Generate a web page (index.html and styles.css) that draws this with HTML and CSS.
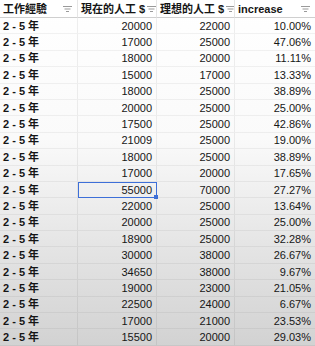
FILE: index.html
```html
<!DOCTYPE html>
<html>
<head>
<meta charset="utf-8">
<link rel="stylesheet" href="styles.css">
</head>
<body>
<div class="sheet">
  <div class="hd">
    <span class="hd-label">工作經驗</span>
    <svg class="flt" width="9" height="6" viewBox="0 0 9 6"><path d="M0 0.5H9M1.5 3H7.5M3 5.5H6" stroke="#9a9a9a" stroke-width="1"/></svg>
  </div>
  <div class="hd">
    <span class="hd-label">現在的人工 $</span>
    <svg class="flt" width="9" height="6" viewBox="0 0 9 6"><path d="M0 0.5H9M1.5 3H7.5M3 5.5H6" stroke="#9a9a9a" stroke-width="1"/></svg>
  </div>
  <div class="hd">
    <span class="hd-label">理想的人工 $</span>
    <svg class="flt" width="9" height="6" viewBox="0 0 9 6"><path d="M0 0.5H9M1.5 3H7.5M3 5.5H6" stroke="#9a9a9a" stroke-width="1"/></svg>
  </div>
  <div class="hd last">
    <span class="hd-label">increase</span>
    <svg class="flt" width="9" height="6" viewBox="0 0 9 6"><path d="M0 0.5H9M1.5 3H7.5M3 5.5H6" stroke="#9a9a9a" stroke-width="1"/></svg>
  </div>

  <div class="c t">2 - 5 年</div><div class="c n">20000</div><div class="c n">22000</div><div class="c n last">10.00%</div>
  <div class="c t">2 - 5 年</div><div class="c n">17000</div><div class="c n">25000</div><div class="c n last">47.06%</div>
  <div class="c t">2 - 5 年</div><div class="c n">18000</div><div class="c n">20000</div><div class="c n last">11.11%</div>
  <div class="c t">2 - 5 年</div><div class="c n">15000</div><div class="c n">17000</div><div class="c n last">13.33%</div>
  <div class="c t">2 - 5 年</div><div class="c n">18000</div><div class="c n">25000</div><div class="c n last">38.89%</div>
  <div class="c t">2 - 5 年</div><div class="c n">20000</div><div class="c n">25000</div><div class="c n last">25.00%</div>
  <div class="c t">2 - 5 年</div><div class="c n">17500</div><div class="c n">25000</div><div class="c n last">42.86%</div>
  <div class="c t">2 - 5 年</div><div class="c n">21009</div><div class="c n">25000</div><div class="c n last">19.00%</div>
  <div class="c t">2 - 5 年</div><div class="c n">18000</div><div class="c n">25000</div><div class="c n last">38.89%</div>
  <div class="c t">2 - 5 年</div><div class="c n">17000</div><div class="c n">20000</div><div class="c n last">17.65%</div>
  <div class="c t">2 - 5 年</div><div class="c n sel">55000<span class="handle"></span></div><div class="c n">70000</div><div class="c n last">27.27%</div>
  <div class="c t">2 - 5 年</div><div class="c n">22000</div><div class="c n">25000</div><div class="c n last">13.64%</div>
  <div class="c t">2 - 5 年</div><div class="c n">20000</div><div class="c n">25000</div><div class="c n last">25.00%</div>
  <div class="c t">2 - 5 年</div><div class="c n">18900</div><div class="c n">25000</div><div class="c n last">32.28%</div>
  <div class="c t">2 - 5 年</div><div class="c n">30000</div><div class="c n">38000</div><div class="c n last">26.67%</div>
  <div class="c t">2 - 5 年</div><div class="c n">34650</div><div class="c n">38000</div><div class="c n last">9.67%</div>
  <div class="c t">2 - 5 年</div><div class="c n">19000</div><div class="c n">23000</div><div class="c n last">21.05%</div>
  <div class="c t">2 - 5 年</div><div class="c n">22500</div><div class="c n">24000</div><div class="c n last">6.67%</div>
  <div class="c t">2 - 5 年</div><div class="c n">17000</div><div class="c n">21000</div><div class="c n last">23.53%</div>
  <div class="c t">2 - 5 年</div><div class="c n">15500</div><div class="c n">20000</div><div class="c n last">29.03%</div>
</div>
</body>
</html>
```
FILE: styles.css
```css
html, body {
  margin: 0;
  padding: 0;
}
body {
  width: 315px;
  height: 346px;
  overflow: hidden;
  background: linear-gradient(to bottom, #ffffff 0%, #fafafa 40%, #e2e2e2 75%, #d2d2d2 100%);
  font-family: "Liberation Sans", "Noto Sans CJK TC", Arial, sans-serif;
  color: #161616;
}
.sheet {
  display: grid;
  grid-template-columns: 78px 79px 78px 80px;
  grid-template-rows: 18px repeat(20, 16.4px);
  height: 346px;
}
.hd {
  display: flex;
  align-items: center;
  justify-content: space-between;
  padding: 0 5px 0 3px;
  font-size: 11px;
  line-height: 12px;
  font-weight: bold;
  border-right: 1px solid #e6e6e6;
  border-bottom: 1px solid #cfcfcf;
  background: #ffffff;
  white-space: nowrap;
  overflow: hidden;
  min-height: 0;
}
.hd.last { border-right: none; }
.flt { flex: none; margin-left: 2px; }
.c {
  display: flex;
  align-items: center;
  font-size: 11px;
  line-height: 12px;
  border-right: 1px solid rgba(0,0,0,0.06);
  border-bottom: 1px solid rgba(0,0,0,0.05);
  white-space: nowrap;
  position: relative;
  min-height: 0;
  box-sizing: border-box;
}
.c.last { border-right: none; }
.t {
  padding-left: 3px;
  font-weight: bold;
}
.n {
  justify-content: flex-end;
  padding-right: 4px;
}
.sel {
  outline: 1.5px solid #3d6fd8;
  outline-offset: -1.5px;
}
.handle {
  position: absolute;
  right: -2px;
  bottom: -2px;
  width: 4px;
  height: 4px;
  background: #3d6fd8;
}
```
